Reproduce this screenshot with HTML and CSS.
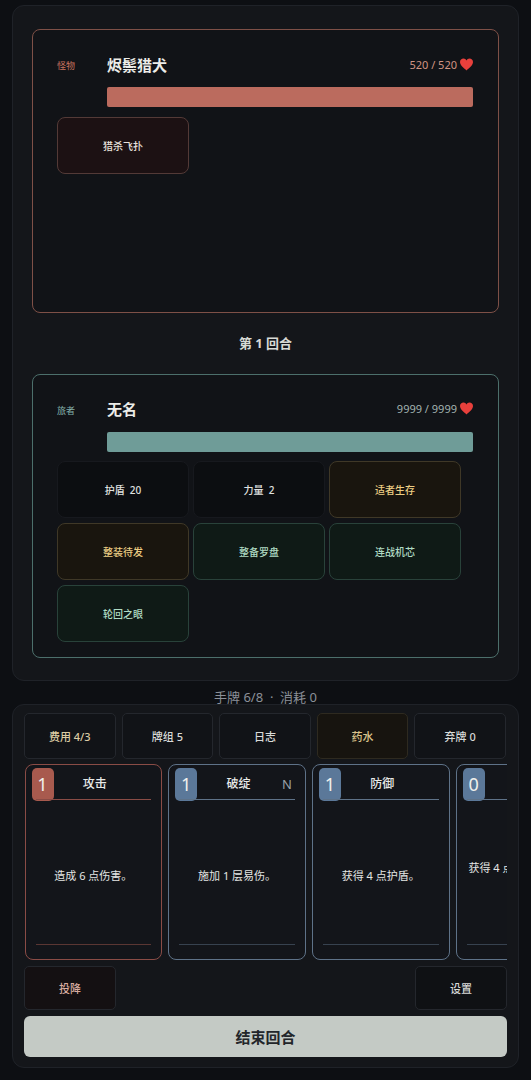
FILE: index.html
```html
<!DOCTYPE html>
<html lang="zh">
<head>
<meta charset="utf-8">
<title>Battle</title>
<link rel="stylesheet" href="styles.css">
</head>
<body>
<main class="arena">
  <section class="unit unit-enemy">
    <div class="unit-head">
      <div class="unit-role">怪物</div>
      <div class="unit-main">
        <div class="unit-line"><span class="unit-name">烬鬃猎犬</span><span class="unit-hp">520 / 520 <svg class="heart" viewBox="0 0 24 24"><path d="M12 23 C8 19 0 14.500 0 7.500 C0 3.500 3 1 6.500 1 C9 1 11 2.500 12 4.500 C13 2.500 15 1 17.500 1 C21 1 24 3.500 24 7.500 C24 14.500 16 19 12 23Z"/></svg></span></div>
        <div class="bar bar-enemy"></div>
      </div>
    </div>
    <div class="chips">
      <div class="chip chip-enemy">猎杀飞扑</div>
    </div>
  </section>
  <div class="round">第 1 回合</div>
  <section class="unit unit-player">
    <div class="unit-head">
      <div class="unit-role">旅者</div>
      <div class="unit-main">
        <div class="unit-line"><span class="unit-name">无名</span><span class="unit-hp">9999 / 9999 <svg class="heart" viewBox="0 0 24 24"><path d="M12 23 C8 19 0 14.500 0 7.500 C0 3.500 3 1 6.500 1 C9 1 11 2.500 12 4.500 C13 2.500 15 1 17.500 1 C21 1 24 3.500 24 7.500 C24 14.500 16 19 12 23Z"/></svg></span></div>
        <div class="bar bar-player"></div>
      </div>
    </div>
    <div class="chips">
      <div class="chip chip-plain">护盾&nbsp; 20</div>
      <div class="chip chip-plain">力量&nbsp; 2</div>
      <div class="chip chip-gold">适者生存</div>
      <div class="chip chip-gold">整装待发</div>
      <div class="chip chip-green">整备罗盘</div>
      <div class="chip chip-green">连战机芯</div>
      <div class="chip chip-green">轮回之眼</div>
    </div>
  </section>
</main>
<div class="pile-info">手牌 6/8 &nbsp;·&nbsp; 消耗 0</div>
<section class="dock">
  <div class="tabs">
    <div class="tab tab-cost">费用 4/3</div>
    <div class="tab">牌组 5</div>
    <div class="tab">日志</div>
    <div class="tab tab-potion">药水</div>
    <div class="tab">弃牌 0</div>
  </div>
  <div class="hand">
    <article class="card card-attack">
      <div class="cost">1</div>
      <div class="card-title">攻击</div>
      <div class="card-text">造成 6 点伤害。</div>
      <div class="card-foot"></div>
    </article>
    <article class="card card-skill">
      <div class="cost">1</div>
      <div class="card-title">破绽<span class="card-tag">N</span></div>
      <div class="card-text">施加 1 层易伤。</div>
      <div class="card-foot"></div>
    </article>
    <article class="card card-skill">
      <div class="cost">1</div>
      <div class="card-title">防御</div>
      <div class="card-text">获得 4 点护盾。</div>
      <div class="card-foot"></div>
    </article>
    <article class="card card-skill">
      <div class="cost">0</div>
      <div class="card-title">闪避</div>
      <div class="card-text">获得 4 点护盾，抽 1 张<br>牌。</div>
      <div class="card-foot"></div>
    </article>
  </div>
  <div class="actions">
    <div class="tab tab-surrender">投降</div>
    <div class="tab tab-settings">设置</div>
  </div>
  <div class="end-turn">结束回合</div>
</section>
</body>
</html>
```
FILE: styles.css
```css
* { box-sizing: border-box; }
html, body { margin: 0; padding: 0; }
body {
  width: 531px;
  height: 1080px;
  overflow: hidden;
  background: #0d0f13;
  color: #e4e6e4;
  font-family: "Noto Sans", "Noto Sans CJK SC", sans-serif;
  padding: 5px 12px 0;
}
.arena {
  height: 676px;
  width: 507px;
  background: #14161a;
  border: 1px solid #1f2228;
  border-radius: 12px;
  padding: 23px 19px 0;
  display: flex;
  flex-direction: column;
}
.unit {
  flex: 0 0 284px;
  background: #111317;
  border: 1px solid;
  border-radius: 8px;
  padding: 21px 24px 0;
}
.unit-enemy { border-color: #7e5047; }
.unit-player { border-color: #4c6f6b; }
.unit-head { display: flex; }
.unit-role { width: 50px; font-size: 9px; line-height: 30px; }
.unit-enemy .unit-role { color: #c8735f; }
.unit-player .unit-role { color: #84b0aa; }
.unit-main { width: 366px; }
.unit-line { display: flex; justify-content: space-between; align-items: center; height: 26px; }
.unit-name { font-size: 15px; font-weight: 700; color: #ecece8; }
.unit-hp { font-size: 11px; display: flex; align-items: center; gap: 3px; }
.unit-enemy .unit-hp { color: #d09482; }
.unit-player .unit-hp { color: #a2b2af; }
.heart { width: 13px; height: 13px; fill: #e8403c; }
.bar { height: 20px; margin-top: 10px; border-radius: 2px; }
.bar-enemy { background: #bb6b5e; }
.bar-player { background: #6f9c98; }
.chips {
  display: grid;
  grid-template-columns: repeat(3, 132px);
  grid-auto-rows: 57px;
  gap: 5px 4px;
  margin-top: 9.7px;
}
.chip {
  display: flex;
  align-items: center;
  justify-content: center;
  font-size: 10px;
  font-weight: 500;
  border: 1px solid;
  border-radius: 8px;
}
.chip-enemy { background: #1c1113; border-color: #533a37; color: #e8e0dc; }
.chip-plain { background: #0c0e11; border-color: #17191e; color: #e0e2e0; }
.chip-gold { background: #19150e; border-color: #3f3827; color: #ecce84; }
.chip-green { background: #0f1a16; border-color: #29423a; color: #b0dcc4; }
.round {
  flex: 0 0 60.6px;
  line-height: 60px;
  text-align: center;
  font-size: 13px;
  font-weight: 700;
  color: #d8dad6;
}
.pile-info {
  height: 23px;
  line-height: 32px;
  width: 507px;
  text-align: center;
  font-size: 13px;
  color: #8b9098;
}
.dock {
  width: 507px;
  height: 364px;
  background: #14161a;
  border: 1px solid #1f2228;
  border-radius: 12px;
  padding: 8px 11px 0;
}
.tabs { display: flex; gap: 6px; width: 482px; }
.tabs .tab { flex: 1 1 0; }
.tab {
  flex: 0 0 92px;
  height: 46px;
  display: flex;
  align-items: center;
  justify-content: center;
  font-size: 11px;
  font-weight: 500;
  color: #d8dad8;
  background: #111317;
  border: 1px solid #24272d;
  border-radius: 5px;
}
.tab-cost { color: #dccca4; }
.tab-potion { background: #17140f; border-color: #2e2a20; color: #dcc48c; }
.tab-surrender { background: #141012; color: #d8aca0; }
.tab-settings { background: #0f1114; }
.hand { display: flex; gap: 6px; margin-top: 5px; width: 483px; overflow: hidden; padding-left: 0.5px; }
.card {
  flex: 0 0 137.7px;
  height: 196px;
  position: relative;
  display: flex;
  flex-direction: column;
  background: #13151a;
  border: 1px solid;
  border-radius: 8px;
  padding: 0 10px;
}
.card-attack { border-color: #8a4c46; }
.card-skill { border-color: #5e7288; }
.cost {
  position: absolute;
  left: 6px;
  top: 2.500px;
  width: 22px;
  height: 33px;
  border-radius: 5px;
  font-size: 18px;
  line-height: 33px;
  text-align: center;
  color: #f0f0ec;
}
.card-attack .cost { background: #a85a4e; }
.card-skill .cost { background: #5b7899; }
.card-title {
  height: 35px;
  padding: 5px 0 0 3px;
  line-height: 28px;
  text-align: center;
  font-size: 12px;
  font-weight: 500;
  color: #e8eae8;
  border-bottom: 1px solid;
  position: relative;
}
.card-attack .card-title { border-color: #8a4c46; }
.card-skill .card-title { border-color: #5e7288; }
.card-tag { position: absolute; right: 3px; top: 5px; font-size: 13px; font-weight: 400; color: #9aa0a8; }
.card-text {
  flex: 1;
  display: flex;
  align-items: center;
  justify-content: center;
  text-align: center;
  font-size: 11px;
  line-height: 16px;
  padding-top: 8px;
  color: #e4e6e4;
  white-space: nowrap;
}
.card-foot { flex: 0 0 1px; margin-bottom: 14px; }
.card-attack .card-foot { background: #5a3633; }
.card-skill .card-foot { background: #37424f; }
.actions { display: flex; justify-content: space-between; margin-top: 6px; }
.actions .tab { height: 44px; }
.end-turn {
  margin-top: 6px;
  height: 41px;
  width: 483px;
  display: flex;
  align-items: center;
  justify-content: center;
  background: #c4cac5;
  border-radius: 6px;
  font-size: 15px;
  font-weight: 700;
  color: #23262a;
}
```
